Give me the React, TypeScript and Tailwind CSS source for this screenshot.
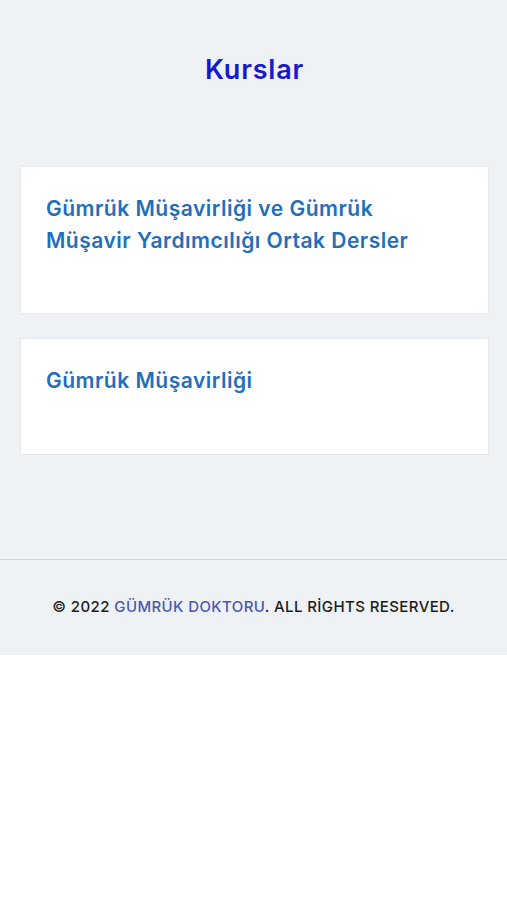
const courses = [
  "Gümrük Müşavirliği ve Gümrük Müşavir Yardımcılığı Ortak Dersler",
  "Gümrük Müşavirliği",
]

export default function App() {
  return (
    <div className="min-h-screen bg-white font-['Inter','Noto_Sans',sans-serif]">
      <div className="bg-[#eef2f5]">
        <main className="pl-5 pr-[18px] pt-[52px] pb-[104px]">
          <h1 className="text-center text-[27px] font-semibold leading-9 tracking-[0.8px] text-[#1818cf]">Kurslar</h1>
          <div className="mt-[78px] flex flex-col gap-6">
            {courses.map((c, i) => (
              <div
                key={c}
                className={`border border-[#e4e8eb] bg-white px-[25px] pt-[26px] ${i === 0 ? "h-[148px]" : "h-[117px]"}`}
              >
                <h3 className="pr-10 text-[21px] font-semibold leading-8 tracking-[0.5px] text-[#1f6fbd]">{c}</h3>
              </div>
            ))}
          </div>
        </main>
        <footer className="border-t border-[#cfd4d8] py-[36px] text-center">
          <p className="text-[15px] font-medium tracking-[0.4px] text-[#1b1b1b]">
            © 2022 <span className="text-[#4a57b4]">GÜMRÜK DOKTORU</span>. ALL RİGHTS RESERVED.
          </p>
        </footer>
      </div>
    </div>
  )
}
